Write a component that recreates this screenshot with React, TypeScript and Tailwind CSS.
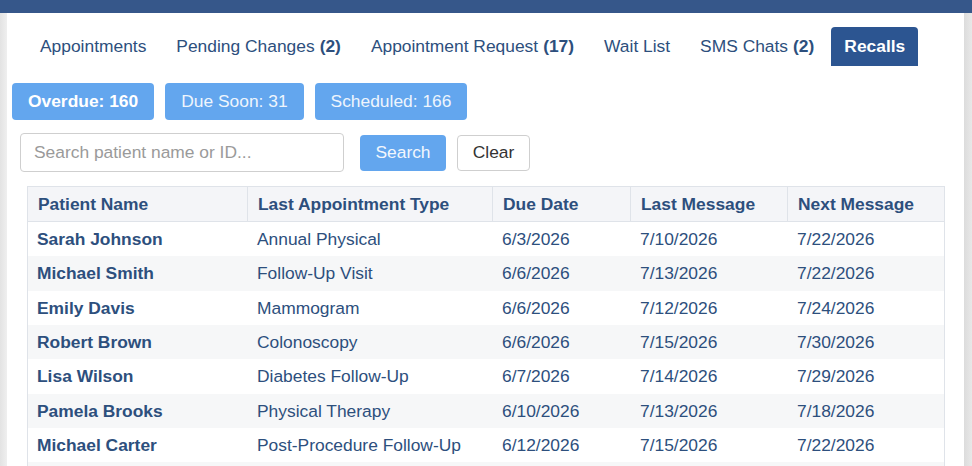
import React from "react";

type Recall = {
  name: string;
  type: string;
  due: string;
  last: string;
  next: string;
};

const recalls: Recall[] = [
  { name: "Sarah Johnson", type: "Annual Physical", due: "6/3/2026", last: "7/10/2026", next: "7/22/2026" },
  { name: "Michael Smith", type: "Follow-Up Visit", due: "6/6/2026", last: "7/13/2026", next: "7/22/2026" },
  { name: "Emily Davis", type: "Mammogram", due: "6/6/2026", last: "7/12/2026", next: "7/24/2026" },
  { name: "Robert Brown", type: "Colonoscopy", due: "6/6/2026", last: "7/15/2026", next: "7/30/2026" },
  { name: "Lisa Wilson", type: "Diabetes Follow-Up", due: "6/7/2026", last: "7/14/2026", next: "7/29/2026" },
  { name: "Pamela Brooks", type: "Physical Therapy", due: "6/10/2026", last: "7/13/2026", next: "7/18/2026" },
  { name: "Michael Carter", type: "Post-Procedure Follow-Up", due: "6/12/2026", last: "7/15/2026", next: "7/22/2026" },
];

const tabs: { label: string; count?: number }[] = [
  { label: "Appointments" },
  { label: "Pending Changes", count: 2 },
  { label: "Appointment Request", count: 17 },
  { label: "Wait List" },
  { label: "SMS Chats", count: 2 },
];

const cols = "grid grid-cols-[219px_245px_138px_157px_157px]";

export default function App() {
  return (
    <div className="w-[972px] h-[466px] overflow-hidden flex flex-col bg-white font-['Liberation_Sans',Arial,sans-serif] text-[17.4px] text-[#2d4f7d]">
      <div className="h-[13px] shrink-0 bg-[#36578a]" />
      <div className="flex flex-1 min-h-0">
        <div className="w-[7px] shrink-0 bg-gradient-to-r from-[#e3e3e3] to-[#efefef]" />
        <div className="flex-1 min-w-0 bg-white flex flex-col overflow-hidden">
          {/* tab strip */}
          <div className="shrink-0 mt-[14px] ml-[18px] h-[39px] flex items-stretch">
            {tabs.map((t) => (
              <div key={t.label} className="px-[15px] flex items-center whitespace-nowrap">
                {t.label}
                {t.count !== undefined && <span className="font-bold ml-[5px]">({t.count})</span>}
              </div>
            ))}
            <div className="ml-[2px] px-[13px] flex items-center bg-[#2c5591] text-white font-bold rounded-t-[4px]">
              Recalls
            </div>
          </div>

          {/* status counters */}
          <div className="shrink-0 mt-[17px] ml-[5px] flex gap-[11px]">
            <div className="h-[37px] px-[16px] flex items-center rounded-[4px] bg-[#63a6ee] text-white font-bold">
              Overdue: 160
            </div>
            <div className="h-[37px] px-[16px] flex items-center rounded-[4px] bg-[#63a6ee] text-[#eef5fd]">
              Due Soon: 31
            </div>
            <div className="h-[37px] px-[16px] flex items-center rounded-[4px] bg-[#63a6ee] text-[#eef5fd]">
              Scheduled: 166
            </div>
          </div>

          {/* search */}
          <div className="shrink-0 mt-[13px] ml-[13px] flex items-center">
            <input
              placeholder="Search patient name or ID..."
              className="w-[324px] h-[39px] px-[13px] rounded-[4px] border border-[#cfcfcf] text-[17.4px] text-[#333] placeholder:text-[#9a9a9a] outline-none"
            />
            <button className="ml-[16px] w-[86px] h-[36px] rounded-[4px] bg-[#63a6ee] text-[#f2f7fd]">
              Search
            </button>
            <button className="ml-[11px] w-[73px] h-[36px] rounded-[4px] border border-[#cfcfcf] bg-white text-[#333]">
              Clear
            </button>
          </div>

          {/* recall table */}
          <div className="shrink-0 mt-[14px] ml-[20px] w-[918px] border-x border-t border-[#dfe3e9]">
            <div className={`${cols} h-[35px] bg-[#f4f5f8] border-b border-[#dfe3e9] font-bold`}>
              {["Patient Name", "Last Appointment Type", "Due Date", "Last Message", "Next Message"].map((h, i) => (
                <div
                  key={h}
                  className={`flex items-center whitespace-nowrap ${i > 0 ? "pl-[10px] border-l border-[#dfe3e9]" : "pl-[10px]"}`}
                >
                  {h}
                </div>
              ))}
            </div>
            {recalls.map((r, i) => (
              <div
                key={r.name + i}
                className={`${cols} h-[34.33px] ${i % 2 === 1 ? "bg-[#f6f7f8]" : "bg-white"}`}
              >
                <div className="pl-[9px] flex items-center font-bold whitespace-nowrap">{r.name}</div>
                <div className="pl-[10px] flex items-center whitespace-nowrap">{r.type}</div>
                <div className="pl-[10px] flex items-center">{r.due}</div>
                <div className="pl-[10px] flex items-center">{r.last}</div>
                <div className="pl-[10px] flex items-center">{r.next}</div>
              </div>
            ))}
            {/* next striped row, scrolled below the fold */}
            <div className="h-[34.33px] bg-[#f6f7f8]" />
          </div>
        </div>
        <div className="w-[8px] shrink-0 bg-gradient-to-r from-[#dcdcdc] to-[#e8e8e8]" />
      </div>
    </div>
  );
}
